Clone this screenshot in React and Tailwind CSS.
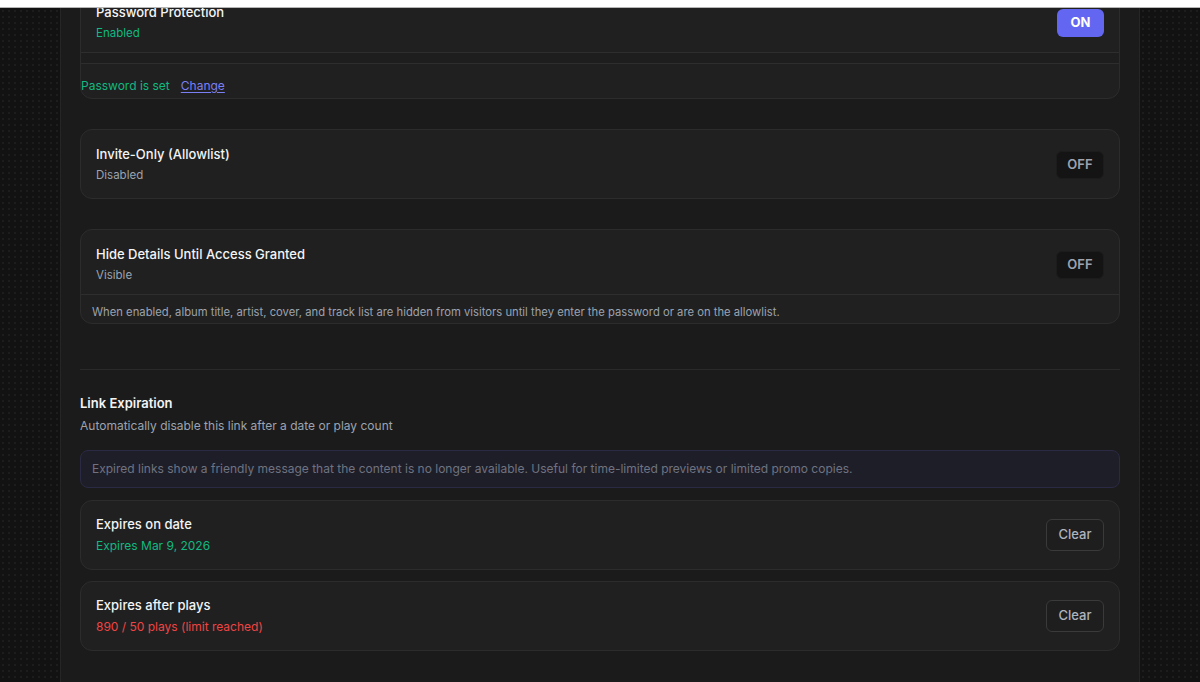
import React from 'react';

const FONT = { fontFamily: 'Inter, "Noto Sans", "Liberation Sans", sans-serif' };

function Toggle({ on }) {
  return on ? (
    <button className="h-[28px] w-[47px] rounded-md bg-[#6366f1] text-[13px] font-bold text-white">ON</button>
  ) : (
    <button className="h-[28px] w-[48px] rounded-md border border-[#1c1c1c] bg-[#141414] text-[13px] font-semibold text-[#9ca3af]">
      OFF
    </button>
  );
}

function ToggleRow({ title, status, statusClass, on, last }) {
  return (
    <div className={`flex items-center justify-between px-[15px] pt-[15px] ${last ? 'pb-[14px]' : 'pb-[10px]'}`}>
      <div className="flex flex-col">
        <span className="text-[13px] leading-[18px] font-medium text-[#f3f4f6]">{title}</span>
        <span className={`mt-[3px] text-[11.5px] leading-[18px] ${statusClass}`}>{status}</span>
      </div>
      <Toggle on={on} />
    </div>
  );
}

function ExpiryCard({ title, detail, detailClass }) {
  return (
    <div className="flex items-center justify-between rounded-xl border border-[#2c2c2c] bg-[#202020] px-[15px] py-[14px]">
      <div className="flex flex-col">
        <span className="text-[13px] leading-[18px] font-medium text-[#f3f4f6]">{title}</span>
        <span className={`mt-[4px] text-[12px] leading-[18px] ${detailClass}`}>{detail}</span>
      </div>
      <button className="h-[32px] w-[58px] rounded-md border border-[#3a3a3a] bg-[#1e1e1e] text-[13px] font-medium text-[#aeb4be]">
        Clear
      </button>
    </div>
  );
}

export default function App() {
  return (
    <div className="flex h-[682px] flex-col overflow-hidden bg-[#121212]" style={FONT}>
      {/* top strip */}
      <div className="h-[8px] shrink-0 border-b border-[#b5b5b5] bg-white" />

      <div className="flex flex-1 justify-center overflow-hidden bg-[#121212] bg-[radial-gradient(#1d1d1d_0.8px,transparent_0.8px)] bg-[size:6px_6px]">
        <div className="w-[1080px] border-x border-[#262626] bg-[#1b1b1b] px-[19px]">
          <div className="-mt-[21px] flex flex-col">

            {/* Password protection */}
            <div className="rounded-xl border border-[#2c2c2c] bg-[#202020]">
              <ToggleRow title="Password Protection" status="Enabled" statusClass="text-[#10b981]" on />
              <div className="h-[12px] border-y border-[#2e2e2e] bg-[#1e1e1e]" />
              <div className="flex h-[34px] items-end pb-[3px] text-[12px]">
                <span className="text-[#10b981]">Password is set</span>
                <span className="ml-[11px] text-[#7b7ff5] underline underline-offset-2">Change</span>
              </div>
            </div>

            {/* Invite only */}
            <div className="mt-[30px] rounded-xl border border-[#2c2c2c] bg-[#202020]">
              <ToggleRow title="Invite-Only (Allowlist)" status="Disabled" statusClass="text-[#9ca3af]" last />
            </div>

            {/* Hide details */}
            <div className="mt-[30px] rounded-xl border border-[#2c2c2c] bg-[#202020]">
              <ToggleRow title="Hide Details Until Access Granted" status="Visible" statusClass="text-[#9ca3af]" />
              <div className="flex h-[29px] items-center border-t border-[#2e2e2e] px-[11px] pt-[6px] text-[11.25px] text-[#9ca3af]">
                When enabled, album title, artist, cover, and track list are hidden from visitors until they enter the password or are on the allowlist.
              </div>
            </div>

            {/* divider */}
            <div className="mt-[45px] h-px bg-[#2a2a2a]" />

            {/* Link expiration */}
            <div className="mt-[23px] flex flex-col">
              <h3 className="text-[13px] leading-[20px] font-semibold text-[#f3f4f6]">Link Expiration</h3>
              <p className="mt-[3px] text-[12px] leading-[20px] text-[#9ca3af]">
                Automatically disable this link after a date or play count
              </p>

              <div className="mt-[14px] flex h-[38px] items-center rounded-lg border border-[#2a2a44] bg-[#1e1e29] px-[11px] text-[12px] text-[#6f7380]">
                Expired links show a friendly message that the content is no longer available. Useful for time-limited previews or limited promo copies.
              </div>

              <div className="mt-[12px] flex flex-col gap-[11px]">
                <ExpiryCard title="Expires on date" detail="Expires Mar 9, 2026" detailClass="text-[#10b981]" />
                <ExpiryCard title="Expires after plays" detail="890 / 50 plays (limit reached)" detailClass="text-[#ef4444]" />
              </div>
            </div>
          </div>
        </div>
      </div>
    </div>
  );
}
